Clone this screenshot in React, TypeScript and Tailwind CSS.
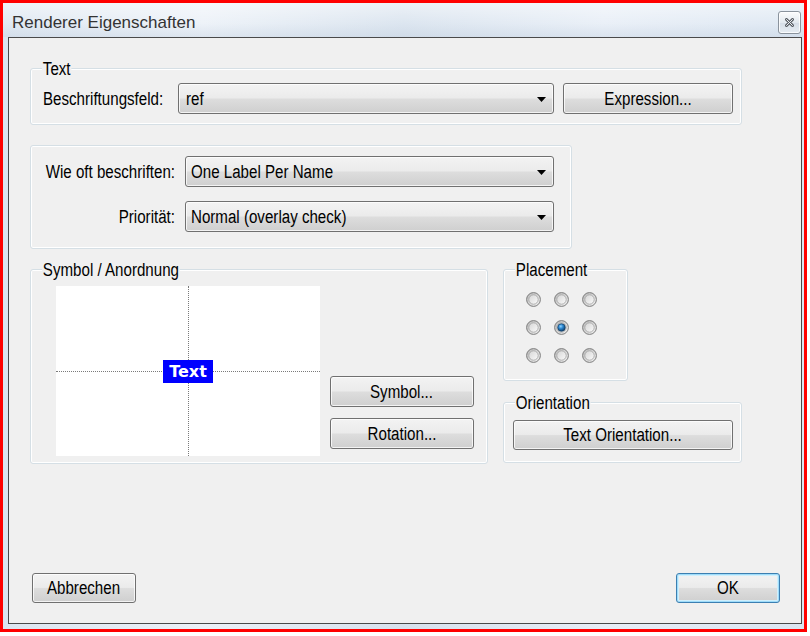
import React from "react";

const BTN_BG =
  "bg-[linear-gradient(to_bottom,#f3f3f3_0%,#ebebeb_48%,#dddddd_52%,#cfcfcf_100%)]";

function T({ children, origin = "origin-left" }: { children: React.ReactNode; origin?: string }) {
  return <span className={`inline-block shrink-0 whitespace-nowrap ${origin} scale-x-[0.84]`}>{children}</span>;
}

function Btn({
  children,
  className = "",
  isDefault = false,
}: {
  children: React.ReactNode;
  className?: string;
  isDefault?: boolean;
}) {
  const frame = isDefault
    ? "border-[#3c7fb1] shadow-[inset_0_0_0_1px_#9fdcfa,inset_0_0_0_2px_#d0effc]"
    : "border-[#707070] shadow-[inset_0_0_0_1px_rgba(255,255,255,0.75)]";
  return (
    <div
      className={`flex items-center justify-center rounded-[3px] border ${frame} ${BTN_BG} text-[18px] leading-none text-black ${className}`}
    >
      <T origin="origin-center">{children}</T>
    </div>
  );
}

function Combo({ value, className = "", padL = "pl-[7px]" }: { value: string; className?: string; padL?: string }) {
  return (
    <div
      className={`flex items-center justify-between rounded-[3px] border border-[#707070] ${BTN_BG} shadow-[inset_0_0_0_1px_rgba(255,255,255,0.75)] ${padL} pr-[7px] text-[18px] leading-none text-black ${className}`}
    >
      <T>{value}</T>
      <svg width="9" height="5" viewBox="0 0 9 5" className="mt-[2px]">
        <path d="M0 0 H9 L4.5 5 Z" fill="#000" />
      </svg>
    </div>
  );
}

function Group({
  legend,
  className = "",
  children,
}: {
  legend?: string;
  className?: string;
  children?: React.ReactNode;
}) {
  return (
    <div className={`relative rounded-[3px] border border-[#d5dfe5] shadow-[inset_0_0_0_1px_#ffffff] ${className}`}>
      {legend && (
        <span className="absolute left-[11px] top-[-10px] inline-block origin-left scale-x-[0.84] whitespace-nowrap bg-[#f0f0f0] px-[1px] text-[18px] leading-[20px] text-black">
          {legend}
        </span>
      )}
      {children}
    </div>
  );
}

function Radio({ checked = false }: { checked?: boolean }) {
  return (
    <svg width="15" height="15" viewBox="0 0 15 15">
      <defs>
        <linearGradient id="rOuter" x1="0" y1="0" x2="1" y2="1">
          <stop offset="0" stopColor="#b8b8b8" />
          <stop offset="1" stopColor="#f6f6f6" />
        </linearGradient>
        <linearGradient id="rInner" x1="0" y1="0" x2="1" y2="1">
          <stop offset="0" stopColor="#d6d6d6" />
          <stop offset="1" stopColor="#fafafa" />
        </linearGradient>
        <radialGradient id="rDot" cx="0.4" cy="0.35" r="0.65">
          <stop offset="0" stopColor="#8fd3ff" />
          <stop offset="0.45" stopColor="#2c86cf" />
          <stop offset="1" stopColor="#0d3e6c" />
        </radialGradient>
      </defs>
      <circle cx="7.5" cy="7.5" r="6.9" fill="url(#rOuter)" stroke="#7c7c7c" strokeWidth="1" />
      <circle cx="7.5" cy="7.5" r="4.7" fill="url(#rInner)" stroke="#9a9a9a" strokeWidth="0.7" />
      {checked && <circle cx="7.5" cy="7.5" r="3.8" fill="url(#rDot)" stroke="#173f63" strokeWidth="0.7" />}
    </svg>
  );
}

export default function App() {
  return (
    <div className="h-[636px] w-[810px] bg-white">
      <div className="flex h-[632px] w-[807px] flex-col border-[3px] border-[#ff0000] bg-[linear-gradient(to_right,#dbe5f0_0%,#eaf0f7_25%,#d6e1ed_50%,#e6edf6_75%,#dae5f1_100%)]">
        {/* Title bar */}
        <div className="flex h-[34px] shrink-0 items-start justify-between bg-[linear-gradient(to_bottom,rgba(255,255,255,0.55),rgba(255,255,255,0.15)_60%,rgba(200,212,226,0.4))] pl-[9px] pr-[3px]">
          <span className="pt-[10px] font-['Liberation_Sans',sans-serif] text-[17px] leading-[20px] text-[#333333]">
            Renderer Eigenschaften
          </span>
          <div className="mt-[8px] flex h-[23px] w-[23px] items-center justify-center rounded-[3px] border border-[#8a939d] bg-[linear-gradient(to_bottom,#fbfcfd,#e3e9ef_50%,#d5dde6_51%,#e7edf3)] shadow-[inset_0_0_0_1px_rgba(255,255,255,0.8)]">
            <svg width="9" height="9" viewBox="0 0 9 9">
              <path d="M1.5 1.5 L7.5 7.5 M7.5 1.5 L1.5 7.5" stroke="#5a5f66" strokeWidth="3" strokeLinecap="round" />
              <path d="M1.5 1.5 L7.5 7.5 M7.5 1.5 L1.5 7.5" stroke="#eef1f4" strokeWidth="1" strokeLinecap="round" />
            </svg>
          </div>
        </div>

        {/* Client area */}
        <div className="ml-[5px] mr-[2px] flex h-[587px] w-[794px] shrink-0 flex-col border border-[#4a4a4a] bg-[#f0f0f0] pl-[21px] pt-[30px] font-['Liberation_Sans',sans-serif] text-black">
          {/* Text group */}
          <Group legend="Text" className="flex h-[57px] w-[712px] items-center pl-[12px] pt-[4px]">
            <span className="w-[135px] text-[18px] leading-[20px]">
              <T>Beschriftungsfeld:</T>
            </span>
            <Combo value="ref" className="h-[31px] w-[376px]" />
            <Btn className="ml-[9px] h-[31px] w-[170px]">Expression...</Btn>
          </Group>

          {/* Label frequency / priority */}
          <Group className="mt-[20px] flex h-[104px] w-[542px] flex-col gap-[14px] pt-[10px]">
            <div className="flex items-center">
              <div className="flex w-[144px] shrink-0 justify-end text-[18px] leading-[20px]">
                <T origin="origin-right">Wie oft beschriften:</T>
              </div>
              <Combo value="One Label Per Name" padL="pl-[5px]" className="ml-[10px] h-[31px] w-[369px]" />
            </div>
            <div className="flex items-center">
              <div className="flex w-[144px] shrink-0 justify-end text-[18px] leading-[20px]">
                <T origin="origin-right">Priorität:</T>
              </div>
              <Combo value="Normal (overlay check)" padL="pl-[5px]" className="ml-[10px] h-[31px] w-[369px]" />
            </div>
          </Group>

          {/* Symbol row */}
          <div className="mt-[20px] flex items-start">
            <Group legend="Symbol / Anordnung" className="flex h-[195px] w-[458px] items-start pl-[25px] pt-[16px]">
              <div className="relative h-[170px] w-[264px] bg-white">
                <div className="absolute left-[132px] top-0 h-full border-l border-dotted border-[#7a7a7a]" />
                <div className="absolute left-0 top-[85px] w-full border-t border-dotted border-[#7a7a7a]" />
                <div className="absolute left-[107px] top-[74px] flex h-[23px] w-[50px] items-center justify-center bg-[#0000ff] font-['DejaVu_Sans',sans-serif] text-[16px] font-bold leading-none text-white">
                  Text
                </div>
              </div>
              <div className="ml-[10px] mt-[90px] flex flex-col gap-[11px]">
                <Btn className="h-[31px] w-[144px]">Symbol...</Btn>
                <Btn className="h-[31px] w-[144px]">Rotation...</Btn>
              </div>
            </Group>

            <div className="ml-[15px] flex flex-col">
              <Group legend="Placement" className="h-[112px] w-[125px] pl-[22px] pt-[22px]">
                <div className="grid w-fit grid-cols-3 gap-[13px]">
                  <Radio />
                  <Radio />
                  <Radio />
                  <Radio />
                  <Radio checked />
                  <Radio />
                  <Radio />
                  <Radio />
                  <Radio />
                </div>
              </Group>
              <Group legend="Orientation" className="mt-[21px] h-[61px] w-[239px] pl-[9px] pt-[17px]">
                <Btn className="h-[30px] w-[220px]">Text Orientation...</Btn>
              </Group>
            </div>
          </div>

          <div className="flex-1" />

          {/* Bottom buttons */}
          <div className="flex items-center justify-between pb-[20px] pl-[2px] pr-[21px]">
            <Btn className="h-[30px] w-[104px]">Abbrechen</Btn>
            <Btn isDefault className="h-[30px] w-[104px]">
              OK
            </Btn>
          </div>
        </div>
      </div>
    </div>
  );
}
